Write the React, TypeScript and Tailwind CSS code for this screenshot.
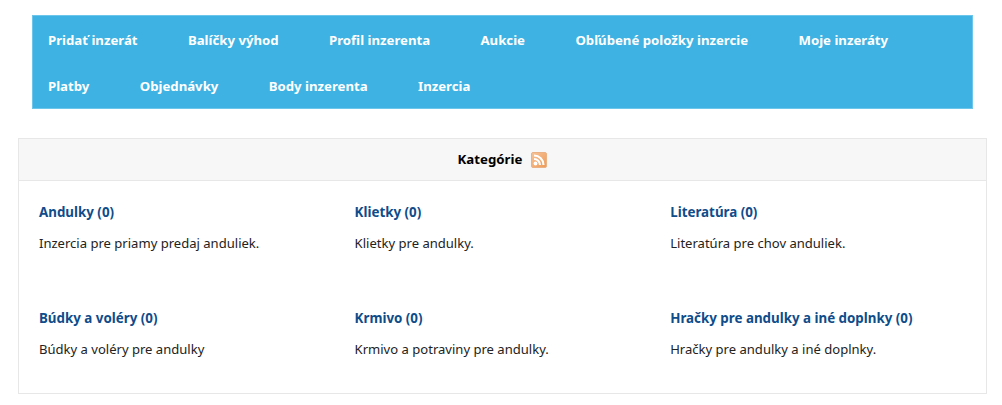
export default function App() {
  const nav = ["Pridať inzerát","Balíčky výhod","Profil inzerenta","Aukcie","Obľúbené položky inzercie","Moje inzeráty","Platby","Objednávky","Body inzerenta","Inzercia"];
  const cats = [
    ["Andulky (0)","Inzercia pre priamy predaj anduliek."],
    ["Klietky (0)","Klietky pre andulky."],
    ["Literatúra (0)","Literatúra pre chov anduliek."],
    ["Búdky a voléry (0)","Búdky a voléry pre andulky"],
    ["Krmivo (0)","Krmivo a potraviny pre andulky."],
    ["Hračky pre andulky a iné doplnky (0)","Hračky pre andulky a iné doplnky."],
  ];
  return (
    <div className="w-[1002px] h-[405px] overflow-hidden bg-white pt-[15px] px-[15px] font-['Noto_Sans','Open_Sans',sans-serif] text-[13px]">
      <nav className="mx-[17px] w-[941px] h-[94px] bg-[#3eb2e2] border border-[#6cc5ea] pl-[15px] flex flex-wrap content-start gap-x-[50.4px]">
        {nav.map(n => (
          <a key={n} className="h-[46px] leading-[48px] font-bold text-white text-[13.2px]">{n}</a>
        ))}
      </nav>
      <section className="mt-[29px] ml-[3px] w-[969px] h-[256px] border border-[#e7e7e7]">
        <header className="h-[42px] bg-[#f7f7f7] border-b border-[#e7e7e7] flex items-center justify-center gap-[9px]">
          <span className="font-bold text-black text-[13.25px] mt-[1px]">Kategórie</span>
          <svg width="16" height="16" viewBox="0 0 16 16" className="mt-[1px]">
            <defs>
              <linearGradient id="rssg" x1="0" y1="0" x2="1" y2="1">
                <stop offset="0" stopColor="#f7c49a" />
                <stop offset="1" stopColor="#ee9a55" />
              </linearGradient>
            </defs>
            <rect x="0.5" y="0.5" width="15" height="15" rx="1.5" fill="url(#rssg)" stroke="#e9b184" />
            <circle cx="4.5" cy="11.5" r="1.9" fill="#fff" />
            <path d="M3 7a6 6 0 0 1 6 6M3 3.5a9.5 9.5 0 0 1 9.5 9.5" fill="none" stroke="#fff" strokeWidth="2.1" />
          </svg>
        </header>
        <div className="grid grid-cols-[315.6px_315.6px_1fr] pl-[20px] pt-[22px]">
          {cats.map(([t,d]) => (
            <div key={t} className="h-[106px]">
              <h3 className="font-bold text-[#0f4c8a] leading-[18px] text-[13.35px]">{t}</h3>
              <p className="mt-[13px] text-[#222] leading-[18px] text-[13.05px]">{d}</p>
            </div>
          ))}
        </div>
      </section>
    </div>
  );
}
